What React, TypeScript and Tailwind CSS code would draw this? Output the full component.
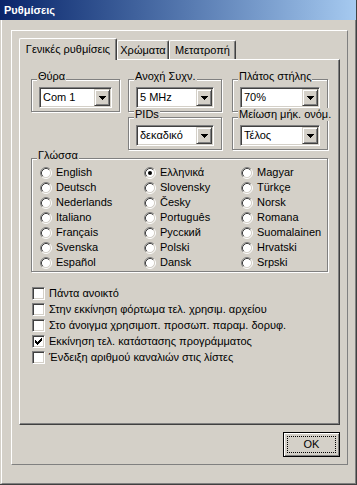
import React from "react";

// Ρυθμίσεις dialog, Win2k look

const face = "bg-[#d4d0c8]";

function Radio({ checked }: { checked?: boolean }) {
  return (
    <svg width="12" height="12" viewBox="0 0 12 12" className="shrink-0">
      <circle cx="6" cy="6" r="4.5" fill="#fff" />
      <path d="M2.11 9.89A5.5 5.5 0 0 1 9.89 2.11" stroke="#808080" fill="none" />
      <path d="M9.89 2.11A5.5 5.5 0 0 1 2.11 9.89" stroke="#fff" fill="none" />
      <path d="M2.82 9.18A4.5 4.5 0 0 1 9.18 2.82" stroke="#404040" fill="none" />
      <path d="M9.18 2.82A4.5 4.5 0 0 1 2.82 9.18" stroke="#d4d0c8" fill="none" />
      {checked && <circle cx="6" cy="6" r="2" fill="#000" />}
    </svg>
  );
}

const tick = [2, 3, 4, 3, 2, 1, 0];

function Check({ checked }: { checked?: boolean }) {
  return (
    <span className="flex h-[13px] w-[13px] shrink-0 items-center justify-center border border-t-[#808080] border-l-[#808080] border-r-white border-b-white bg-white shadow-[inset_1px_1px_0_#404040,inset_-1px_-1px_0_#d4d0c8]">
      {checked && (
        <svg width="7" height="7" viewBox="0 0 7 7" shapeRendering="crispEdges">
          {tick.map((y, x) => (
            <rect key={x} x={x} y={y} width="1" height="3" fill="#000" />
          ))}
        </svg>
      )}
    </span>
  );
}

function Combo({ value }: { value: string }) {
  return (
    <div className="flex h-[21px] items-center border border-t-[#808080] border-l-[#808080] border-r-white border-b-white bg-white pl-[3px] pr-[1px] shadow-[inset_1px_1px_0_#404040,inset_-1px_-1px_0_#d4d0c8]">
      <span className="flex-1 whitespace-nowrap">{value}</span>
      <span className="flex h-[17px] w-[16px] items-center justify-center border border-t-[#d4d0c8] border-l-[#d4d0c8] border-r-[#404040] border-b-[#404040] bg-[#d4d0c8] shadow-[inset_1px_1px_0_#fff,inset_-1px_-1px_0_#808080]">
        <svg width="7" height="4" viewBox="0 0 7 4" shapeRendering="crispEdges">
          <path d="M0 0h7v1h-1v1h-1v1h-1v1h-1v-1h-1v-1h-1v-1h-1z" fill="#000" />
        </svg>
      </span>
    </div>
  );
}

function Group({
  label,
  className,
  children,
}: {
  label: string;
  className?: string;
  children: React.ReactNode;
}) {
  return (
    <div
      className={`relative border border-[#808080] shadow-[1px_1px_0_#fff,inset_1px_1px_0_#fff] ${className}`}
    >
      <span className="absolute -top-[10px] left-[5px] whitespace-nowrap bg-[#d4d0c8] px-[1px] leading-[13px]">
        {label}
      </span>
      {children}
    </div>
  );
}

const languages = [
  ["English", "Deutsch", "Nederlands", "Italiano", "Français", "Svenska", "Español"],
  ["Ελληνικά", "Slovensky", "Česky", "Português", "Русский", "Polski", "Dansk"],
  ["Magyar", "Türkçe", "Norsk", "Romana", "Suomalainen", "Hrvatski", "Srpski"],
];
const colWidths = ["w-[104px]", "w-[97px]", "flex-1"];

const options = [
  { label: "Πάντα ανοικτό", checked: false },
  { label: "Στην εκκίνηση φόρτωμα τελ. χρησιμ. αρχείου", checked: false },
  { label: "Στο άνοιγμα χρησιμοπ. προσωπ. παραμ. δορυφ.", checked: false },
  { label: "Εκκίνηση τελ. κατάστασης προγράμματος", checked: true },
  { label: "Ένδειξη αριθμού καναλιών στις λίστες", checked: false },
];

export default function App() {
  return (
    <div
      className={`flex h-[485px] w-[357px] flex-col border-r border-b border-r-[#404040] border-b-[#404040] ${face} font-['Liberation_Sans',Arial,sans-serif] text-[11px] leading-[13px] text-black`}
    >
      <div className="flex h-[20px] shrink-0 items-center bg-gradient-to-r from-[#0a246a] to-[#a6caf0] pl-[4px] text-[11px] font-bold text-white">
        Ρυθμίσεις
      </div>

      <div className="ml-[1px] flex flex-1 flex-col border-l border-r border-b border-l-white border-r-[#808080] border-b-[#808080] pl-[9px] pt-[10px]">
        <div className="flex h-[435px] w-[337px] flex-col border border-t-white border-l-white border-r-[#808080] border-b-[#808080] px-[7px] pt-[7px]">
          {/* tabs */}
          <div className="flex h-[21px] items-end">
            <div className="relative z-10 -mb-px flex h-[22px] w-[98px] justify-center rounded-t-[2px] border-t border-l border-r border-t-white border-l-white border-r-[#404040] bg-[#d4d0c8] pt-[4px] shadow-[inset_-1px_0_0_#808080]">
              Γενικές ρυθμίσεις
            </div>
            <div className="flex h-[19px] w-[52px] justify-center rounded-t-[2px] border-t border-l border-r border-t-white border-l-white border-r-[#404040] pt-[3px] shadow-[inset_-1px_0_0_#808080]">
              Χρώματα
            </div>
            <div className="flex h-[19px] w-[67px] justify-center rounded-t-[2px] border-t border-l border-r border-t-white border-l-white border-r-[#404040] pt-[3px] shadow-[inset_-1px_0_0_#808080]">
              Μετατροπή
            </div>
          </div>

          {/* tab page */}
          <div className="flex h-[366px] flex-col border border-t-white border-l-white border-r-[#404040] border-b-[#404040] pl-[11px] pt-[19px] shadow-[inset_-1px_-1px_0_#808080]">
            <div className="flex items-start">
              <Group label="Θύρα" className="w-[89px] px-[7px] pt-[7px] pb-[3px]">
                <Combo value="Com 1" />
              </Group>
              <Group label="Ανοχή Συχν." className="ml-[8px] w-[94px] px-[7px] pt-[7px] pb-[3px]">
                <Combo value="5 MHz" />
              </Group>
              <Group label="Πλάτος στήλης" className="ml-[10px] w-[96px] px-[7px] pt-[7px] pb-[3px]">
                <Combo value="70%" />
              </Group>
            </div>

            <div className="mt-[5px] flex items-start pl-[97px]">
              <Group label="PIDs" className="w-[94px] px-[7px] pt-[7px] pb-[3px]">
                <Combo value="δεκαδικό" />
              </Group>
              <Group label="Μείωση μήκ. ονόμ." className="ml-[10px] w-[96px] px-[7px] pt-[7px] pb-[3px]">
                <Combo value="Τέλος" />
              </Group>
            </div>

            <Group label="Γλώσσα" className="mt-[8px] flex w-[297px] pl-[8px] pt-[6px] pb-[1px]">
              {languages.map((col, i) => (
                <div key={i} className={`flex flex-col ${colWidths[i]}`}>
                  {col.map((lang) => (
                    <div key={lang} className="flex h-[15px] items-center gap-[4px]">
                      <Radio checked={lang === "Ελληνικά"} />
                      <span className="whitespace-nowrap">{lang}</span>
                    </div>
                  ))}
                </div>
              ))}
            </Group>

            <div className="mt-[13px] flex flex-col pl-[1px]">
              {options.map((o) => (
                <div key={o.label} className="flex h-[16px] items-center gap-[4px]">
                  <Check checked={o.checked} />
                  <span className="whitespace-nowrap">{o.label}</span>
                </div>
              ))}
            </div>
          </div>

          <div className="mt-[7px] flex justify-end">
            <button className="flex h-[25px] w-[57px] border border-black bg-[#d4d0c8] p-[3px] shadow-[inset_1px_1px_0_#fff,inset_-1px_-1px_0_#808080]">
              <span className="flex h-full w-full items-center justify-center border border-dotted border-black">
                OK
              </span>
            </button>
          </div>
        </div>
      </div>
    </div>
  );
}
